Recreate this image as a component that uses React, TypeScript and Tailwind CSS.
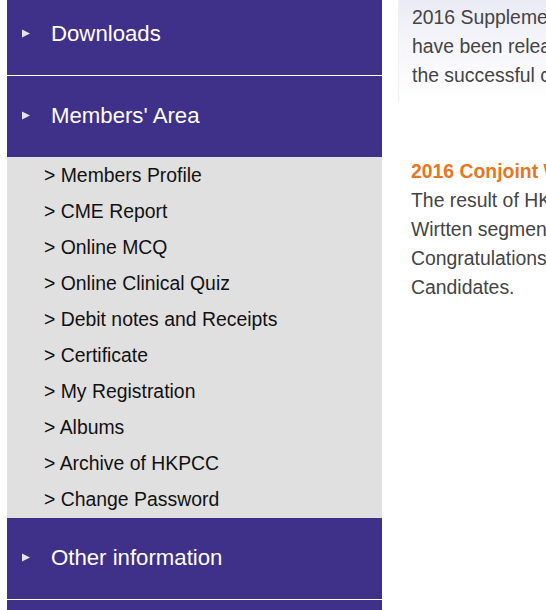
import React from 'react'

const font = { fontFamily: '"Liberation Sans", Arial, sans-serif' }

const memberLinks = [
  'Members Profile',
  'CME Report',
  'Online MCQ',
  'Online Clinical Quiz',
  'Debit notes and Receipts',
  'Certificate',
  'My Registration',
  'Albums',
  'Archive of HKPCC',
  'Change Password',
]

const Arrow = () => (
  <svg width="8" height="9" viewBox="0 0 8 9" className="shrink-0">
    <path d="M0 0.5 L8 4.5 L0 8.5 Z" fill="#e4e4ee" />
  </svg>
)

const SectionHeader: React.FC<{ label: string; divider?: boolean }> = ({ label, divider }) => (
  <>
    <div className="h-[81px] flex items-center pl-[15px] pb-[2px] gap-[21px] bg-[#3f3089] text-white text-[22.2px]">
      <Arrow />
      <span>{label}</span>
    </div>
    {divider && <div className="h-px bg-white" />}
  </>
)

const App: React.FC = () => {
  return (
    <div className="w-[546px] h-[610px] overflow-hidden bg-white flex items-start" style={font}>
      {/* sidebar */}
      <div className="ml-[7px] w-[375px] shrink-0 -mt-[6px]">
        <SectionHeader label="Downloads" divider />
        <SectionHeader label="Members' Area" />
        <div className="bg-[#e1e0e0] pt-[1px]">
          {memberLinks.map((item) => (
            <div key={item} className="h-[36px] flex items-center pl-[37px] text-[19.4px] text-[#111]">
              {'> ' + item}
            </div>
          ))}
        </div>
        <SectionHeader label="Other information" divider />
        <div className="h-[81px] bg-[#3f3089]" />
      </div>

      {/* news column */}
      <div className="ml-[16px] shrink-0 w-[400px] text-[19.4px] leading-[29px] text-[#444] whitespace-nowrap">
        <div className="-mt-[10px] pt-[13px] pb-[12px] pl-[13px] bg-gradient-to-b from-[#e8e8f4] via-[#f6f6fb] to-white border-l border-[#f0f0f4]">
          2016 Supplementary Examination Results
          <br />
          have been released. Congratulations to
          <br />
          the successful candidates.
        </div>
        <div className="pl-[13px] mt-[55px]">
          <div className="font-bold text-[#e8761d]">2016 Conjoint Written Examination</div>
          The result of HKPCC Conjoint Examination
          <br />
          Wirtten segment has been released.
          <br />
          Congratulations to all successful
          <br />
          Candidates.
        </div>
      </div>
    </div>
  )
}

export default App
